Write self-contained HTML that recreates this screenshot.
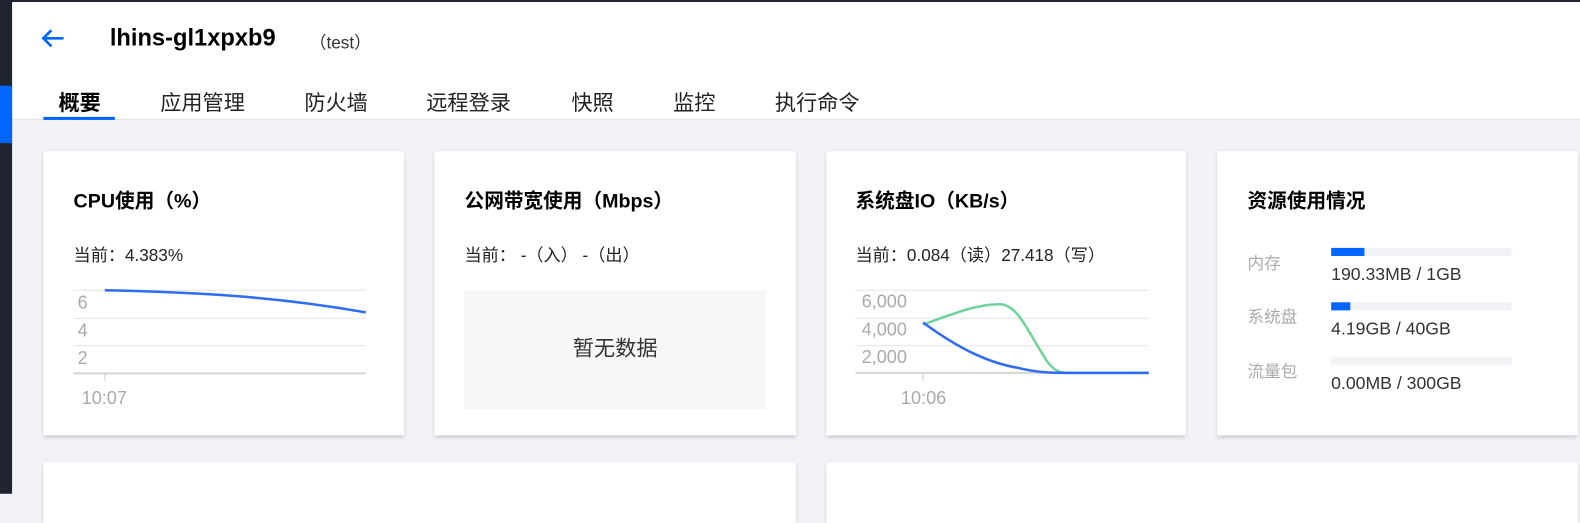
<!DOCTYPE html>
<html><head><meta charset="utf-8"><style>
*{margin:0;padding:0;box-sizing:border-box}
html,body{width:1580px;height:493px;overflow:hidden;background:#f2f3f7;font-family:"Liberation Sans","Noto Sans CJK SC",sans-serif;color:#222}
#w{position:absolute;left:0;top:0;width:1568px;height:490px;transform:scale(1.0077);transform-origin:0 0}
.a{position:absolute}
.card{position:absolute;background:#fff;box-shadow:0 2px 4px rgba(0,0,0,.18)}
.t{position:absolute;font-size:19.5px;font-weight:bold;color:#000;white-space:nowrap}
.c{position:absolute;font-size:17px;color:#222;white-space:nowrap}
.tab{position:absolute;top:86px;font-size:21px;color:#222;white-space:nowrap}
.lb{position:absolute;left:30px;font-size:16.5px;color:#aaa}
.bar{position:absolute;left:113px;width:179px;height:8px;background:#f1f2f5}
.bar i{position:absolute;left:0;top:0;height:8px;background:#0066ff}
.v{position:absolute;left:113px;font-size:17.5px;color:#333;white-space:nowrap}
</style></head><body>
<div class="a" style="left:0;top:0;width:12px;height:493px;background:#1f2430"></div>
<div id="w">
<div class="a" style="left:0;top:0;width:1568px;height:119px;background:#fff;border-bottom:1px solid #e3e5ea"></div>
<div class="a" style="left:0;top:0;width:1568px;height:2px;background:#1f2430"></div>
<div class="a" style="left:0;top:0;width:12px;height:490px;background:#1f2430"></div>
<div class="a" style="left:0;top:85px;width:12px;height:57px;background:#0066ff"></div>
<svg class="a" style="left:40px;top:27px" width="26" height="22" viewBox="0 0 26 22"><path d="M3 11H23M11 3L3 11L11 19" fill="none" stroke="#0066ff" stroke-width="2.6"/></svg>
<div class="a" style="left:109px;top:24px;font-size:23.5px;font-weight:bold;color:#000">lhins-gl1xpxb9</div>
<div class="a" style="left:307px;top:28px;font-size:17px;color:#333">（test）</div>
<div class="tab" style="left:58px;font-weight:bold;color:#000">概要</div>
<div class="tab" style="left:159px">应用管理</div>
<div class="tab" style="left:302px">防火墙</div>
<div class="tab" style="left:423px">远程登录</div>
<div class="tab" style="left:567px">快照</div>
<div class="tab" style="left:668px">监控</div>
<div class="tab" style="left:769px">执行命令</div>
<div class="a" style="left:43px;top:116px;width:71px;height:3px;background:#0066ff"></div>

<div class="card" style="left:43px;top:150px;width:358px;height:282px">
<div class="t" style="left:30px;top:33px">CPU使用（%）</div>
<div class="c" style="left:30px;top:89px">当前：4.383%</div>
<svg class="a" style="left:0;top:0" width="358" height="282">
<g stroke="#ececec" stroke-width="1.5"><line x1="30" y1="138" x2="320" y2="138"/><line x1="30" y1="166" x2="320" y2="166"/><line x1="30" y1="193" x2="320" y2="193"/></g>
<line x1="30" y1="220.5" x2="320" y2="220.5" stroke="#d4d4d4" stroke-width="2"/>
<line x1="61" y1="221" x2="61" y2="228" stroke="#ccc"/>
<g fill="#aaa" font-size="18" font-family="Liberation Sans"><text x="34" y="156">6</text><text x="34" y="184">4</text><text x="34" y="211">2</text><text x="38" y="251">10:07</text></g>
<path d="M61 138 C150 140 230 144 320 160" fill="none" stroke="#2e6cf6" stroke-width="2.5"/>
</svg></div>

<div class="card" style="left:431px;top:150px;width:359px;height:282px">
<div class="t" style="left:30px;top:33px">公网带宽使用（Mbps）</div>
<div class="c" style="left:30px;top:89px">当前： -（入） -（出）</div>
<div class="a" style="left:30px;top:138px;width:299px;height:118px;background:#f6f6f7;font-size:21px;color:#333;text-align:center;line-height:118px">暂无数据</div>
</div>

<div class="card" style="left:820px;top:150px;width:357px;height:282px">
<div class="t" style="left:29px;top:33px">系统盘IO（KB/s）</div>
<div class="c" style="left:29px;top:89px">当前：0.084（读）27.418（写）</div>
<svg class="a" style="left:0;top:0" width="357" height="282">
<g stroke="#ececec" stroke-width="1.5"><line x1="29" y1="138" x2="320" y2="138"/><line x1="29" y1="166" x2="320" y2="166"/><line x1="29" y1="193" x2="320" y2="193"/></g>
<line x1="29" y1="220" x2="320" y2="220" stroke="#d4d4d4" stroke-width="2"/>
<line x1="96" y1="221" x2="96" y2="228" stroke="#ccc"/>
<g fill="#aaa" font-size="18" font-family="Liberation Sans"><text x="35" y="155">6,000</text><text x="35" y="183">4,000</text><text x="35" y="210">2,000</text><text x="74" y="251">10:06</text></g>
<path d="M96 172 C130 160 150 152 170 152 C190 150 200 180 220 210 C228 220 235 220 240 220 L320 220" fill="none" stroke="#6fd39a" stroke-width="2.5"/>
<path d="M96 170 C130 195 160 210 190 215 C210 220 225 220 240 220 L320 220" fill="none" stroke="#2e6cf6" stroke-width="2.5"/>
</svg></div>

<div class="card" style="left:1208px;top:150px;width:358px;height:282px">
<div class="t" style="left:30px;top:33px">资源使用情况</div>
<div class="lb" style="top:98px">内存</div>
<div class="bar" style="top:96px"><i style="width:33px"></i></div>
<div class="v" style="top:112px">190.33MB / 1GB</div>
<div class="lb" style="top:151px">系统盘</div>
<div class="bar" style="top:150px"><i style="width:19px"></i></div>
<div class="v" style="top:166px">4.19GB / 40GB</div>
<div class="lb" style="top:205px">流量包</div>
<div class="bar" style="top:204px"></div>
<div class="v" style="top:220px">0.00MB / 300GB</div>
</div>

<div class="card" style="left:43px;top:459px;width:747px;height:60px"></div>
<div class="card" style="left:820px;top:459px;width:746px;height:60px"></div>
</div></body></html>
